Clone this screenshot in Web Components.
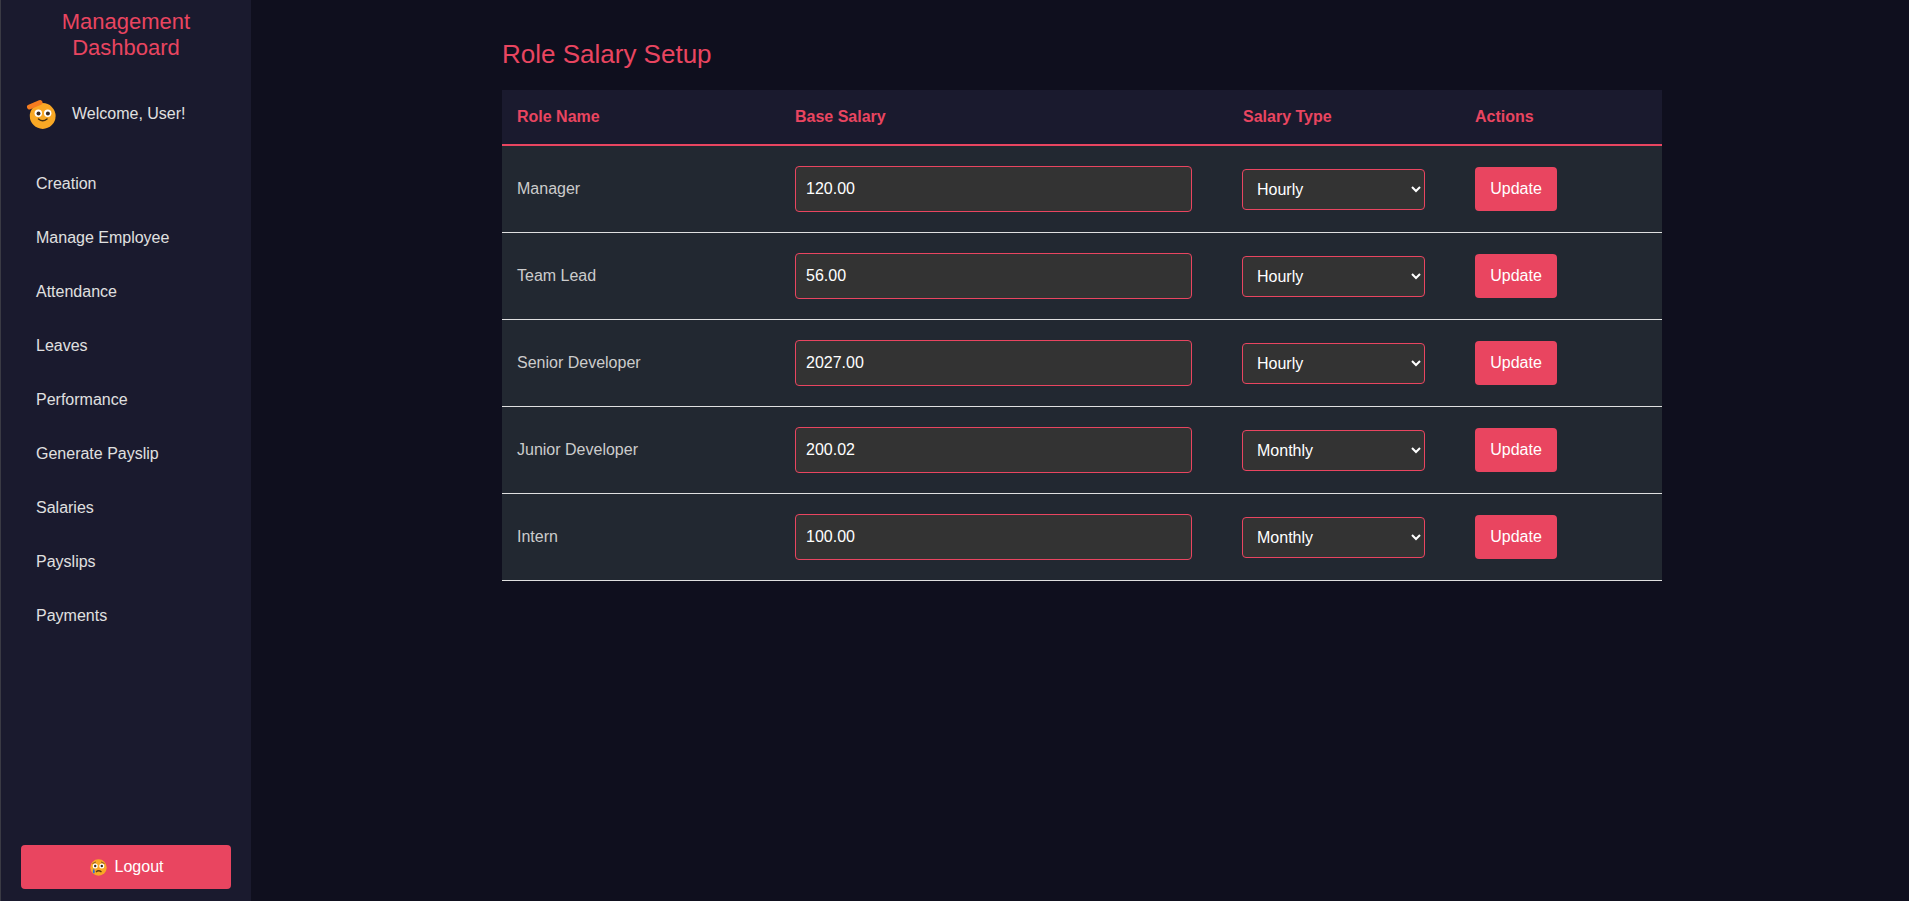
<!DOCTYPE html>
<html>
<head>
<meta charset="utf-8">
<title>Role Salary Setup</title>
<style>
  html, body { margin: 0; height: 100%; background: #0f0f1e; font-family: "Liberation Sans", Arial, sans-serif; color: #e0e0e0; overflow: hidden; }
</style>
</head>
<body>
<dash-app>
  <side-bar slot="side"></side-bar>
  <salary-table slot="main"></salary-table>
</dash-app>
<script>
// dashboard shell: sidebar on the left, content on the right
class DashApp extends HTMLElement {
  constructor() {
    super();
    this.attachShadow({mode: 'open'});
    this.shadowRoot.innerHTML = `
    <style>
      :host { display: flex; height: 901px; }
      main { flex: 1; min-width: 0; padding: 0 0 0 251px; box-sizing: border-box; }
    </style>
    <slot name="side"></slot>
    <main><slot name="main"></slot></main>`;
  }
}

class NavItem extends HTMLElement {
  constructor() {
    super();
    this.attachShadow({mode: 'open'});
    this.shadowRoot.innerHTML = `
    <style>
      :host { display: block; height: 54px; line-height: 54px; padding-left: 35px; font-size: 16px; color: #e0e0e0; }
    </style>
    <slot></slot>`;
  }
}

class SideBar extends HTMLElement {
  constructor() {
    super();
    this.attachShadow({mode: 'open'});
    const links = ['Creation', 'Manage Employee', 'Attendance', 'Leaves', 'Performance',
      'Generate Payslip', 'Salaries', 'Payslips', 'Payments'];
    this.shadowRoot.innerHTML = `
    <style>
      :host { display: flex; flex-direction: column; width: 251px; height: 901px; box-sizing: border-box; background: #1a1a2e; border-left: 1px solid #3a3a44; }
      h1 { margin: 0; height: 60px; box-sizing: border-box; padding: 9px 40px 0; font-size: 22px; font-weight: 400; line-height: 25.5px; color: #e94560; text-align: center; }
      .user { display: flex; align-items: center; gap: 14px; height: 32px; margin: 37px 0 0 25px; font-size: 16px; }
      .user span { position: relative; top: 1px; }
      nav { margin-top: 28px; }
      .logout { margin: auto 0 12px 20px; width: 210px; height: 44px; display: flex; align-items: center; justify-content: center; gap: 7px; background: #e94560; border-radius: 4px; color: #fff; font-size: 16px; }
      .logout span { position: relative; left: 1px; }
    </style>
    <h1>Management Dashboard</h1>
    <div class="user">
      <svg width="32" height="32" viewBox="0 0 32 32">
        <circle cx="16.700" cy="19" r="12.900" fill="#f9a825"/>
        <path d="M3.500 10 L14 5.500" fill="none" stroke="#f57c1f" stroke-width="5" stroke-linecap="round"/>
        <circle cx="12.300" cy="16.300" r="3.700" fill="#fff"/><circle cx="21.700" cy="16.300" r="3.700" fill="#fff"/>
        <circle cx="12.500" cy="16.500" r="2" fill="#3a2a20"/><circle cx="21.900" cy="16.500" r="2" fill="#3a2a20"/>
        <path d="M12.500 22 Q16.700 25.500 21 22" fill="none" stroke="#4a3010" stroke-width="1.500" stroke-linecap="round"/>
      </svg>
      <span>Welcome, User!</span>
    </div>
    <nav>${links.map(l => `<nav-item>${l}</nav-item>`).join('')}</nav>
    <div class="logout">
      <svg width="17" height="17" viewBox="0 0 17 17">
        <circle cx="8.500" cy="8.500" r="8.200" fill="#f9a825"/>
        <path d="M2.500 4.500 L6 3 M14.500 4.500 L11 3" stroke="#8a5a20" stroke-width="1"/>
        <circle cx="5.200" cy="7" r="2.500" fill="#fff"/><circle cx="11.800" cy="7" r="2.500" fill="#fff"/>
        <circle cx="5.200" cy="7" r="1.200" fill="#3a2a20"/><circle cx="11.800" cy="7" r="1.200" fill="#3a2a20"/>
        <path d="M6 13 Q8.500 10.500 11.500 13" fill="none" stroke="#5a3a10" stroke-width="1.300"/>
        <path d="M3.800 9.500 C2.500 11.500 2.500 14.500 3.800 14.500 C5.100 14.500 5.100 11.500 3.800 9.500Z" fill="#2f6fd6"/>
      </svg>
      <span>Logout</span>
    </div>`;
  }
}

// one row of the table, reads role, salary and type from its attributes
class SalaryRow extends HTMLElement {
  constructor() {
    super();
    this.attachShadow({mode: 'open'});
    const type = this.getAttribute('type');
    this.shadowRoot.innerHTML = `
    <style>
      :host { display: grid; grid-template-columns: 293px 447px 233px 187px; align-items: center; height: 87px; box-sizing: border-box; background: #222831; border-bottom: 1px solid #e0e0e0; font-size: 16px; color: #ccc; }
      .role { padding-left: 15px; }
      input { display: block; width: 397px; height: 46px; box-sizing: border-box; padding: 0 10px; background: #333; color: #fff; border: 1px solid #e94560; border-radius: 4px; font: 16px "Liberation Sans", Arial, sans-serif; outline: none; }
      select { display: block; width: 183px; height: 41px; box-sizing: border-box; padding: 0 10px; background: #333; color: #fff; border: 1px solid #e94560; border-radius: 4px; font: 16px "Liberation Sans", Arial, sans-serif; outline: none; }
      button { display: block; width: 82px; height: 44px; background: #e94560; color: #fff; border: none; border-radius: 4px; font: 16px "Liberation Sans", Arial, sans-serif; padding: 0; }
    </style>
    <div class="role">${this.getAttribute('role-name')}</div>
    <div><input type="text" value="${this.getAttribute('salary')}"></div>
    <div><select>
      <option ${type == 'Hourly' ? 'selected' : ''}>Hourly</option>
      <option ${type == 'Monthly' ? 'selected' : ''}>Monthly</option>
    </select></div>
    <div><button>Update</button></div>`;
  }
}

class SalaryTable extends HTMLElement {
  constructor() {
    super();
    this.attachShadow({mode: 'open'});
    const roles = [
      ['Manager', '120.00', 'Hourly'],
      ['Team Lead', '56.00', 'Hourly'],
      ['Senior Developer', '2027.00', 'Hourly'],
      ['Junior Developer', '200.02', 'Monthly'],
      ['Intern', '100.00', 'Monthly']
    ];
    this.shadowRoot.innerHTML = `
    <style>
      :host { display: block; width: 1160px; }
      h2 { margin: 0; padding-top: 39px; height: 51px; font-size: 26px; line-height: 30px; font-weight: 400; color: #e94560; }
      .head { display: grid; grid-template-columns: 278px 448px 232px 202px; align-items: center; height: 56px; box-sizing: border-box; background: #1a1a2e; border-bottom: 2px solid #e94560; font-size: 16px; font-weight: 700; color: #e94560; }
      .head div { padding-left: 15px; }
    </style>
    <h2>Role Salary Setup</h2>
    <div class="head"><div>Role Name</div><div>Base Salary</div><div>Salary Type</div><div>Actions</div></div>
    ${roles.map(r => `<salary-row role-name="${r[0]}" salary="${r[1]}" type="${r[2]}"></salary-row>`).join('')}`;
  }
}

customElements.define('nav-item', NavItem);
customElements.define('salary-row', SalaryRow);
customElements.define('side-bar', SideBar);
customElements.define('salary-table', SalaryTable);
customElements.define('dash-app', DashApp);
</script>
</body>
</html>
